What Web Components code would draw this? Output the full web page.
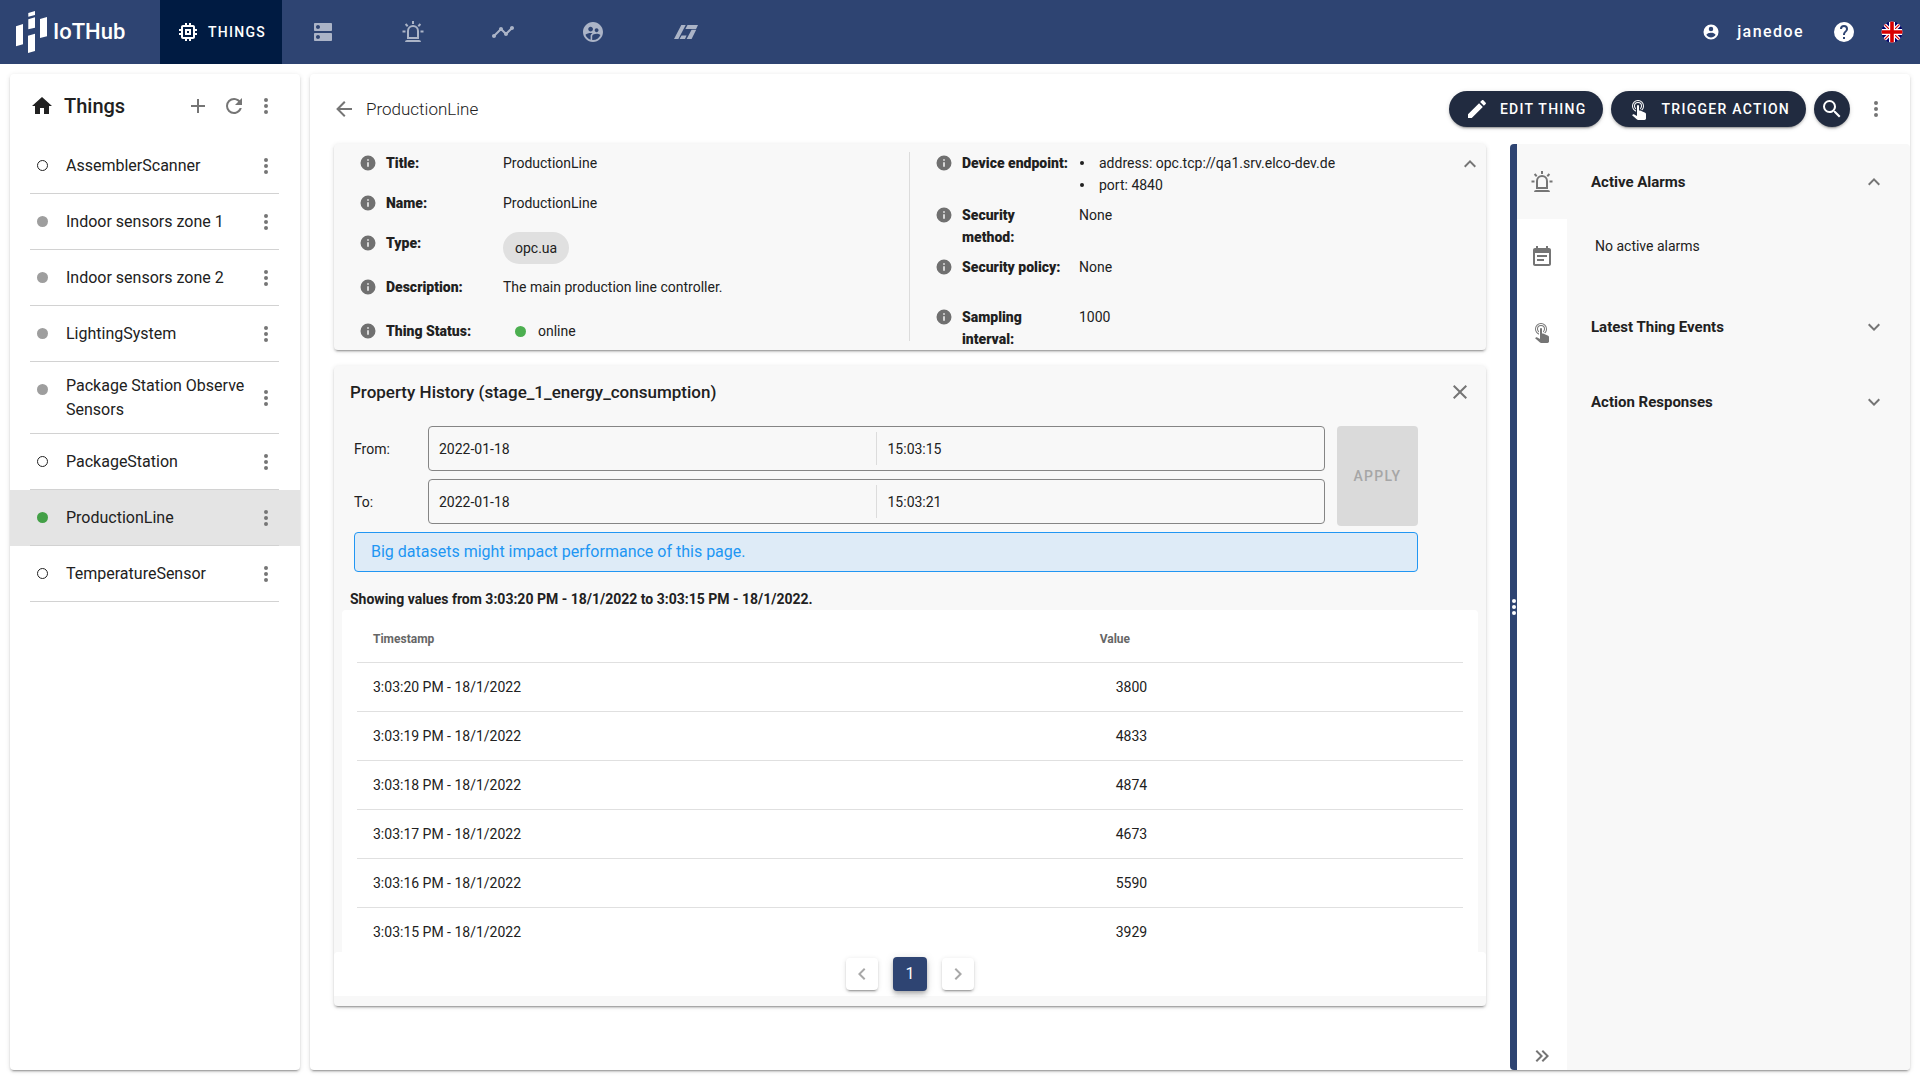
<!DOCTYPE html>
<html lang="en">
<head>
<meta charset="utf-8">
<meta name="viewport" content="width=device-width, initial-scale=1">
<title>IoTHub - Things</title>
<style>
html,body{margin:0;height:100%}
body{font:14px/22px Roboto,"Liberation Sans",sans-serif;color:#212121;background:#fff}
</style>
</head>
<body>
<iot-app></iot-app>
<script>
const BASE = `
*{box-sizing:border-box}
button{font:inherit;color:inherit;background:none;border:0;padding:0;margin:0;cursor:pointer;display:inline-flex;align-items:center;justify-content:center}
button:disabled{cursor:default}
h1,h2,h3,p,ul,dl,dd,dt{margin:0;padding:0;font:inherit}
a{color:inherit;text-decoration:none}
.card{border-radius:4px;box-shadow:0 3px 1px -2px rgba(0,0,0,.2),0 2px 2px rgba(0,0,0,.14),0 1px 5px rgba(0,0,0,.12)}
`;
function define(name, html, init) {
  const t = document.createElement('template');
  t.innerHTML = html.replace('<style>', '<style>' + BASE);
  customElements.define(name, class extends HTMLElement {
    constructor() {
      super();
      this.attachShadow({mode: 'open'}).append(t.content.cloneNode(true));
    }
    connectedCallback() { if (init) init(this, this.shadowRoot); }
  });
}

const ICONS = {
  memory: 'M15 9H9v6h6V9zm-2 4h-2v-2h2v2zm8-2V9h-2V7c0-1.1-.9-2-2-2h-2V3h-2v2h-2V3H9v2H7c-1.1 0-2 .9-2 2v2H3v2h2v2H3v2h2v2c0 1.1.9 2 2 2h2v2h2v-2h2v2h2v-2h2c1.1 0 2-.9 2-2v-2h2v-2h-2v-2h2zm-4 6H7V7h10v10z',
  dns: 'M20 13H4c-.55 0-1 .45-1 1v6c0 .55.45 1 1 1h16c.55 0 1-.45 1-1v-6c0-.55-.45-1-1-1zM7 19c-1.1 0-2-.9-2-2s.9-2 2-2 2 .9 2 2-.9 2-2 2zM20 3H4c-.55 0-1 .45-1 1v6c0 .55.45 1 1 1h16c.55 0 1-.45 1-1V4c0-.55-.45-1-1-1zM7 9c-1.1 0-2-.9-2-2s.9-2 2-2 2 .9 2 2-.9 2-2 2z',
  alarm: 'M6,6.9L3.87,4.78L5.28,3.37L7.4,5.5L6,6.9M13,1V4H11V1H13M20.13,4.78L18,6.9L16.6,5.5L18.72,3.37L20.13,4.78M4.5,10.5V12.5H1.5V10.5H4.5M19.5,10.5H22.5V12.5H19.5V10.5M6,20H18A2,2 0 0,1 20,22H4A2,2 0 0,1 6,20M12,5A6,6 0 0,1 18,11V19H6V11A6,6 0 0,1 12,5M12,7A4,4 0 0,0 8,11V17H16V11A4,4 0 0,0 12,7Z',
  timeline: 'M23 8c0 1.1-.9 2-2 2-.18 0-.35-.02-.51-.07l-3.56 3.55c.05.16.07.34.07.52 0 1.1-.9 2-2 2s-2-.9-2-2c0-.18.02-.36.07-.52l-2.55-2.55c-.16.05-.34.07-.52.07s-.36-.02-.52-.07l-4.55 4.56c.05.16.07.33.07.51 0 1.1-.9 2-2 2s-2-.9-2-2 .9-2 2-2c.18 0 .35.02.51.07l4.56-4.55C8.02 9.36 8 9.18 8 9c0-1.1.9-2 2-2s2 .9 2 2c0 .18-.02.36-.07.52l2.55 2.55c.16-.05.34-.07.52-.07s.36.02.52.07l3.55-3.56C19.02 8.35 19 8.18 19 8c0-1.1.9-2 2-2s2 .9 2 2z',
  users: 'M11.99 2c-5.52 0-10 4.48-10 10s4.48 10 10 10 10-4.48 10-10-4.48-10-10-10zm3.61 6.34c1.07 0 1.93.86 1.93 1.93 0 1.07-.86 1.93-1.93 1.93-1.07 0-1.93-.86-1.93-1.93-.01-1.07.86-1.93 1.93-1.93zm-6-1.58c1.3 0 2.36 1.06 2.36 2.36 0 1.3-1.06 2.36-2.36 2.36s-2.36-1.06-2.36-2.36c0-1.31 1.05-2.36 2.36-2.36zm0 9.13v3.75c-2.4-.75-4.3-2.6-5.14-4.96 1.05-1.12 3.67-1.69 5.14-1.69.53 0 1.2.08 1.9.22-1.64.87-1.9 2.02-1.9 2.68zM11.99 20c-.27 0-.53-.01-.79-.04v-4.07c0-1.42 2.94-2.13 4.4-2.13 1.07 0 2.92.39 3.84 1.15-1.17 2.97-4.06 5.09-7.45 5.09z',
  slashes: 'M7.3 5H11.7L4.4 19H0zM7.6 15.4H12.6L11 19H5.6zM13.5 5H24L22.1 8.9H11.4zM17.6 9.8H22.2L17.6 19H12.6z',
  account: 'M12,19.2C9.5,19.2 7.29,17.92 6,16C6.03,14 10,12.9 12,12.9C14,12.9 17.97,14 18,16C16.71,17.92 14.5,19.2 12,19.2M12,5A3,3 0 0,1 15,8A3,3 0 0,1 12,11A3,3 0 0,1 9,8A3,3 0 0,1 12,5M12,2A10,10 0 0,0 2,12A10,10 0 0,0 12,22A10,10 0 0,0 22,12C22,6.47 17.5,2 12,2Z',
  help: 'M15.07,11.25L14.17,12.17C13.45,12.89 13,13.5 13,15H11V14.5C11,13.39 11.45,12.39 12.17,11.67L13.41,10.41C13.78,10.05 14,9.55 14,9C14,7.89 13.1,7 12,7A2,2 0 0,0 10,9H8A4,4 0 0,1 12,5A4,4 0 0,1 16,9C16,9.88 15.64,10.67 15.07,11.25M13,19H11V17H13M12,2A10,10 0 0,0 2,12A10,10 0 0,0 12,22A10,10 0 0,0 22,12C22,6.47 17.5,2 12,2Z',
  info: 'M13,9H11V7H13M13,17H11V11H13M12,2A10,10 0 0,0 2,12A10,10 0 0,0 12,22A10,10 0 0,0 22,12A10,10 0 0,0 12,2Z',
  home: 'M10,20V14H14V20H19V12H22L12,3L2,12H5V20H10Z',
  plus: 'M19,13H13V19H11V13H5V11H11V5H13V11H19V13Z',
  refresh: 'M17.65,6.35C16.2,4.9 14.21,4 12,4A8,8 0 0,0 4,12A8,8 0 0,0 12,20C15.73,20 18.84,17.45 19.73,14H17.65C16.83,16.33 14.61,18 12,18A6,6 0 0,1 6,12A6,6 0 0,1 12,6C13.66,6 15.14,6.69 16.22,7.78L13,11H20V4L17.65,6.35Z',
  dots: 'M12,16A2,2 0 0,1 14,18A2,2 0 0,1 12,20A2,2 0 0,1 10,18A2,2 0 0,1 12,16M12,10A2,2 0 0,1 14,12A2,2 0 0,1 12,14A2,2 0 0,1 10,12A2,2 0 0,1 12,10M12,4A2,2 0 0,1 14,6A2,2 0 0,1 12,8A2,2 0 0,1 10,6A2,2 0 0,1 12,4Z',
  back: 'M20,11V13H8L13.5,18.5L12.08,19.92L4.16,12L12.08,4.08L13.5,5.5L8,11H20Z',
  pencil: 'M20.71,7.04C21.1,6.65 21.1,6 20.71,5.63L18.37,3.29C18,2.9 17.35,2.9 16.96,3.29L15.12,5.12L18.87,8.87M3,17.25V21H6.75L17.81,9.93L14.06,6.18L3,17.25Z',
  tap: 'M10,9A1,1 0 0,1 11,8A1,1 0 0,1 12,9V13.47L13.21,13.6L18.15,15.79C18.68,16.03 19,16.56 19,17.14V21.5C18.97,22.32 18.32,22.97 17.5,23H11C10.62,23 10.26,22.85 10,22.57L5.1,18.37L5.84,17.6C6.03,17.39 6.3,17.28 6.58,17.28H6.8L10,19V9M11,5A4,4 0 0,1 15,9C15,10.5 14.2,11.77 13,12.46V11.24C13.61,10.69 14,9.89 14,9A3,3 0 0,0 11,6A3,3 0 0,0 8,9C8,9.89 8.39,10.69 9,11.24V12.46C7.8,11.77 7,10.5 7,9A4,4 0 0,1 11,5M11,3A6,6 0 0,1 17,9C17,10.7 16.29,12.23 15.16,13.33L14.16,12.88C15.28,11.96 16,10.56 16,9A5,5 0 0,0 11,4A5,5 0 0,0 6,9C6,11.05 7.23,12.81 9,13.58V14.66C6.67,13.83 5,11.61 5,9A6,6 0 0,1 11,3Z',
  search: 'M9.5,3A6.5,6.5 0 0,1 16,9.5C16,11.11 15.41,12.59 14.44,13.73L14.71,14H15.5L20.5,19L19,20.5L14,15.5V14.71L13.73,14.44C12.59,15.41 11.11,16 9.5,16A6.5,6.5 0 0,1 3,9.5A6.5,6.5 0 0,1 9.5,3M9.5,5C7,5 5,7 5,9.5C5,12 7,14 9.5,14C12,14 14,12 14,9.5C14,7 12,5 9.5,5Z',
  note: 'M17 10H7v2h10v-2zm2-7h-1V1h-2v2H8V1H6v2H5c-1.11 0-1.99.9-1.99 2L3 19c0 1.1.89 2 2 2h14c1.1 0 2-.9 2-2V5c0-1.1-.9-2-2-2zm0 16H5V8h14v11zm-5-5H7v2h7v-2z',
  up: 'M7.41,15.41L12,10.83L16.59,15.41L18,14L12,8L6,14L7.41,15.41Z',
  down: 'M7.41,8.58L12,13.17L16.59,8.58L18,10L12,16L6,10L7.41,8.58Z',
  left: 'M15.41,16.58L10.83,12L15.41,7.41L14,6L8,12L14,18L15.41,16.58Z',
  right: 'M8.59,16.58L13.17,12L8.59,7.41L10,6L16,12L10,18L8.59,16.58Z',
  collapse: 'M5.59,7.41L7,6L13,12L7,18L5.59,16.59L10.17,12L5.59,7.41M11.59,7.41L13,6L19,12L13,18L11.59,16.59L16.17,12L11.59,7.41Z',
  close: 'M19,6.41L17.59,5L12,10.59L6.41,5L5,6.41L10.59,12L5,17.59L6.41,19L12,13.41L17.59,19L19,17.59L13.41,12L19,6.41Z'
};
define('iot-icon', `<style>
:host{display:inline-flex;flex:none;width:24px;height:24px}
svg{width:100%;height:100%;fill:currentColor}
</style><svg viewBox="0 0 24 24" aria-hidden="true"><path/></svg>`,
(el, root) => root.querySelector('path').setAttribute('d', ICONS[el.getAttribute('name')]));

define('iot-logo', `<style>
:host{display:flex;align-items:center;color:#fff}
svg{width:32px;height:42px;fill:currentColor}
.name{font-size:22px;line-height:32px;font-weight:500;margin-left:5px}
</style>
<svg viewBox="0 0 32 42" aria-hidden="true"><path d="M0 15.3L7 13V33.3L0 35.3zM12.3 2L19 0V4L12.3 5.7zM12.3 8.3L19 6.3V16.7L12.3 18.3zM12 24.7L19 22.7V40L12 42zM24 8L31 6V25.3L24 27z"/></svg>
<span class="name">IoTHub</span>`);

define('iot-flag', `<style>
:host{display:flex}
svg{width:22px;height:22px}
</style>
<svg viewBox="0 0 22 22" role="img" aria-label="English"><defs><clipPath id="c"><circle cx="11" cy="11" r="10.5"/></clipPath></defs>
<g clip-path="url(#c)"><rect width="22" height="22" fill="#00006b"/>
<path d="M0 0L22 22M22 0L0 22" stroke="#fff" stroke-width="3.6"/><path d="M0 0L22 22M22 0L0 22" stroke="#d00" stroke-width="1.2"/>
<path d="M11 0V22M0 11H22" stroke="#fff" stroke-width="6"/><path d="M11 0V22M0 11H22" stroke="#d80000" stroke-width="3.6"/></g></svg>`);

define('iot-topbar', `<style>
:host{display:flex;align-items:center;height:64px;flex:none;background:#2e4472;color:#fff}
iot-logo{width:160px;flex:none;padding-left:16px}
nav{display:flex;align-items:center;align-self:stretch;gap:66px;color:#abb4c7}
a{display:flex;align-items:center;justify-content:center}
.on{align-self:stretch;justify-content:flex-start;width:122px;padding-left:16px;gap:8px;margin-right:-37px;background:#001b42;color:#fff;font-weight:500;letter-spacing:.09em}
.wide{width:30px}
.end{display:flex;align-items:center;margin-left:auto;padding-right:17px}
.user{gap:17px;font-size:16px;line-height:24px;font-weight:500;letter-spacing:.09em}
.user iot-icon{width:18px;height:18px}
.help{margin:0 25px 0 28px}
</style>
<iot-logo></iot-logo>
<nav>
<a class="on" href="#things"><iot-icon name="memory"></iot-icon><span>THINGS</span></a>
<a href="#servers" aria-label="Data sources"><iot-icon name="dns"></iot-icon></a>
<a href="#alarms" aria-label="Alarms"><iot-icon name="alarm"></iot-icon></a>
<a href="#charts" aria-label="Charts"><iot-icon name="timeline"></iot-icon></a>
<a href="#users" aria-label="Users"><iot-icon name="users"></iot-icon></a>
<a class="wide" href="#flows" aria-label="Flows"><iot-icon name="slashes"></iot-icon></a>
</nav>
<div class="end">
<button class="user"><iot-icon name="account"></iot-icon>janedoe</button>
<button class="help" aria-label="Help"><iot-icon name="help"></iot-icon></button>
<button aria-label="Language"><iot-flag></iot-flag></button>
</div>`);

define('thing-item', `<style>
:host{display:block;padding:0 21px 0 20px;color:#212121;font-size:16px;line-height:24px}
:host([selected]){background:#e4e4e4}
.row{display:flex;min-height:56px;border-bottom:1px solid #d2d2d2}
.dot{flex:none;width:11px;height:11px;margin:22px 18px 0 7px;border-radius:50%;background:#9e9e9e}
:host([status=unknown]) .dot{background:none;border:1px solid #212121}
:host([status=online]) .dot{background:#43a047}
a{flex:1;padding:16px 0 15px}
:host([tall]) a{padding:12px 0 11px}
button{color:#757575;margin-right:1px}
</style>
<div class="row"><span class="dot"></span><a href="#thing"><slot></slot></a><button aria-label="More"><iot-icon name="dots"></iot-icon></button></div>`);

define('things-list', `<style>
:host{display:block;background:#fff}
header{display:flex;align-items:center;height:64px;padding:0 22px 0 20px;color:#757575}
header .home{color:#212121}
h1{flex:1;font-size:20px;line-height:32px;font-weight:500;color:#212121;margin-left:10px}
button{margin-left:12px}
button:last-child{margin-left:8px}
</style>
<header><iot-icon class="home" name="home"></iot-icon><h1>Things</h1>
<button aria-label="Add"><iot-icon name="plus"></iot-icon></button>
<button aria-label="Refresh"><iot-icon name="refresh"></iot-icon></button>
<button aria-label="More"><iot-icon name="dots"></iot-icon></button></header>
<thing-item status="unknown">AssemblerScanner</thing-item>
<thing-item>Indoor sensors zone 1</thing-item>
<thing-item>Indoor sensors zone 2</thing-item>
<thing-item>LightingSystem</thing-item>
<thing-item tall>Package Station Observe Sensors</thing-item>
<thing-item status="unknown">PackageStation</thing-item>
<thing-item status="online" selected>ProductionLine</thing-item>
<thing-item status="unknown">TemperatureSensor</thing-item>`);

define('pill-button', `<style>
:host{display:block}
button{height:36px;border-radius:18px;background:#212b40;color:#fff;font-weight:500;letter-spacing:.09em;padding:0 16px;gap:11px;box-shadow:0 3px 1px -2px rgba(0,0,0,.2),0 2px 2px rgba(0,0,0,.14),0 1px 5px rgba(0,0,0,.12)}
:host([round]) button{width:36px;padding:0}
</style><button><slot></slot></button>`,
(el, root) => { if (el.title) root.querySelector('button').setAttribute('aria-label', el.title); });

define('thing-field', `<style>
:host{display:flex;align-items:flex-start}
iot-icon{width:18px;height:18px;color:#707070;margin:2px 9px 0 0}
.label{width:117px;flex:none;font-weight:700}
.label span{display:block;max-width:108px}
</style><iot-icon name="info"></iot-icon><div class="label"><span><slot name="label"></slot></span></div><div><slot></slot></div>`);

define('thing-details', `<style>
:host{display:flex;background:#f8f8f8;padding:8px 4px 0 0}
.col{display:grid;align-content:start;padding-left:25px}
.a{width:50%;flex:none;margin-right:1px;grid-template-rows:40px 40px 44px 44px 22px}
.b{flex:1;grid-template-rows:52px 52px 50px 44px}
.line{width:1px;background:#dcdcdc;margin-bottom:9px}
.chip{display:block;background:#e0e0e0;border-radius:16px;line-height:32px;padding:0 12px}
.status{display:flex;align-items:center;gap:12px;padding-left:12px}
.status i{width:11px;height:11px;border-radius:50%;background:#4caf50}
li{display:flex;align-items:center}
li::before{content:"";width:4px;height:4px;border-radius:50%;background:#212121;margin:0 15px 0 1px}
button{align-self:flex-start;color:#757575}
</style>
<div class="col a">
<thing-field><b slot="label">Title:</b>ProductionLine</thing-field>
<thing-field><b slot="label">Name:</b>ProductionLine</thing-field>
<thing-field><b slot="label">Type:</b><span class="chip">opc.ua</span></thing-field>
<thing-field><b slot="label">Description:</b>The main production line controller.</thing-field>
<thing-field><b slot="label">Thing Status:</b><span class="status"><i></i>online</span></thing-field>
</div>
<div class="line"></div>
<div class="col b">
<thing-field><b slot="label">Device endpoint:</b><ul><li>address: opc.tcp://qa1.srv.elco-dev.de</li><li>port: 4840</li></ul></thing-field>
<thing-field><b slot="label">Security method:</b>None</thing-field>
<thing-field><b slot="label">Security policy:</b>None</thing-field>
<thing-field><b slot="label">Sampling interval:</b>1000</thing-field>
</div>
<button aria-label="Collapse"><iot-icon name="up"></iot-icon></button>`);

define('date-range', `<style>
:host{display:grid;grid-template-columns:74px 1fr 81px;row-gap:8px;align-items:center}
.field{display:flex;align-items:center;height:45px;border:1px solid #858585;border-radius:4px;margin-right:12px}
input{flex:1;width:0;height:33px;font:inherit;color:inherit;background:none;border:0;outline:0;padding:0 10px;margin:0}
input + input{border-left:1px solid #dcdcdc;padding-left:11px}
button{grid-column:3;grid-row:1/3;align-self:stretch;margin-bottom:-2px;background:#dadada;color:#a6a6a6;border-radius:4px;font-weight:500;letter-spacing:.09em}
</style>
<label for="fd">From:</label><div class="field"><input id="fd" value="2022-01-18"><input aria-label="From time" value="15:03:15"></div>
<label for="td">To:</label><div class="field"><input id="td" value="2022-01-18"><input aria-label="To time" value="15:03:21"></div>
<button disabled>APPLY</button>`);

define('value-table', `<style>
:host{display:block;background:#fff;border-radius:4px;padding:4px 15px 0;margin:0 8px -5px}
table{width:100%;border-collapse:separate;border-spacing:0;table-layout:fixed}
th,td{height:49px;padding:0 16px;text-align:left;border-bottom:1px solid #e0e0e0}
th{font-size:12px;font-weight:700;color:#666;padding-top:2px}
th:first-child{width:65.7%}
td + td{padding-left:32px}
</style>
<table><thead><tr><th>Timestamp</th><th>Value</th></tr></thead><tbody></tbody></table>`,
(el, root) => {
  const values = [[20, 3800], [19, 4833], [18, 4874], [17, 4673], [16, 5590], [15, 3929]];
  root.querySelector('tbody').innerHTML = values.map(([s, v]) => `<tr><td>3:03:${s} PM - 18/1/2022</td><td>${v}</td></tr>`).join('');
});

define('page-nav', `<style>
:host{display:block;background:#fff;position:relative;border-radius:4px 4px 0 0}
nav{display:flex;justify-content:center;align-items:center;height:44px;gap:15px}
button{width:32px;height:32px;border-radius:4px;background:#fff;color:#a8a8a8;box-shadow:0 3px 1px -2px rgba(0,0,0,.2),0 2px 2px rgba(0,0,0,.14),0 1px 5px rgba(0,0,0,.12)}
.on{width:34px;height:34px;background:#2e4472;color:#fff;font-size:16px;box-shadow:0 2px 4px -1px rgba(0,0,0,.2),0 4px 5px rgba(0,0,0,.14),0 1px 10px rgba(0,0,0,.12)}
</style>
<nav><button aria-label="Previous page" disabled><iot-icon name="left"></iot-icon></button><button class="on">1</button><button aria-label="Next page" disabled><iot-icon name="right"></iot-icon></button></nav>`);

define('property-history', `<style>
:host{display:block;background:#f8f8f8;padding-bottom:10px}
header{display:flex;align-items:center;justify-content:space-between;height:52px;padding:0 14px 0 16px}
h2{font-size:17px;line-height:24px;font-weight:500}
header button{color:#757575}
.form{margin:8px 68px 0 20px}
.note{margin-top:8px;border:1px solid #2196f3;border-radius:4px;background:#deebf7;color:#2196f3;font-size:16px;line-height:38px;padding:0 16px}
.sum{font-weight:700;margin:16px 16px 0}
</style>
<header><h2>Property History (stage_1_energy_consumption)</h2><button aria-label="Close"><iot-icon name="close"></iot-icon></button></header>
<div class="form"><date-range></date-range><p class="note">Big datasets might impact performance of this page.</p></div>
<p class="sum">Showing values from 3:03:20 PM - 18/1/2022 to 3:03:15 PM - 18/1/2022.</p>
<value-table></value-table>
<page-nav></page-nav>`);

define('side-section', `<style>
:host{display:block}
button{width:100%;height:75px;padding:0 24px;justify-content:space-between;font-size:15px;font-weight:700}
iot-icon{color:#757575}
.body{height:70px;padding:16px 28px;display:none}
:host([open]) .body{display:block}
</style><button><slot name="title"></slot><iot-icon name="down"></iot-icon></button><div class="body"><slot></slot></div>`,
(el, root) => {
  const icon = document.createElement('iot-icon');
  icon.setAttribute('name', el.hasAttribute('open') ? 'up' : 'down');
  root.querySelector('iot-icon').replaceWith(icon);
});

define('side-panel', `<style>
:host{display:flex;background:#f8f8f8;border-radius:4px}
.grip{flex:none;width:7px;background:#2e4472;border-radius:4px 0 0 4px;display:flex;flex-direction:column;align-items:center;justify-content:center;gap:2px}
.grip i{width:4px;height:4px;border-radius:50%;background:#fff}
.rail{flex:none;width:50px;background:#fff;display:flex;flex-direction:column;color:#757575}
.rail button{height:75px}
.rail .on{background:#f8f8f8}
.rail .last{margin-top:auto;height:28px}
.body{flex:1}
</style>
<div class="grip"><i></i><i></i><i></i></div>
<div class="rail"><button class="on" aria-label="Alarms"><iot-icon name="alarm"></iot-icon></button><button aria-label="Events"><iot-icon name="note"></iot-icon></button><button aria-label="Actions"><iot-icon name="tap"></iot-icon></button><button class="last" aria-label="Collapse"><iot-icon name="collapse"></iot-icon></button></div>
<div class="body">
<side-section open><span slot="title">Active Alarms</span>No active alarms</side-section>
<side-section><span slot="title">Latest Thing Events</span></side-section>
<side-section><span slot="title">Action Responses</span></side-section>
</div>`);

define('thing-view', `<style>
:host{display:flex;flex-direction:column;background:#fff}
header{display:flex;align-items:center;height:70px;flex:none;padding:0 22px;color:#757575}
h2{flex:1;font-size:17px;line-height:24px;font-weight:300;color:#212121;margin-left:10px}
pill-button{margin-right:8px}
.more{margin-left:6px}
.main{flex:1;display:flex;min-height:0}
.left{flex:1;padding:0 24px;display:flex;flex-direction:column;gap:16px}
side-panel{width:25%}
</style>
<header><button aria-label="Back"><iot-icon name="back"></iot-icon></button><h2>ProductionLine</h2>
<pill-button><iot-icon name="pencil"></iot-icon>EDIT THING</pill-button>
<pill-button><iot-icon name="tap"></iot-icon>TRIGGER ACTION</pill-button>
<pill-button round title="Search"><iot-icon name="search"></iot-icon></pill-button>
<button class="more" aria-label="More"><iot-icon name="dots"></iot-icon></button></header>
<div class="main"><div class="left"><thing-details class="card"></thing-details><property-history class="card"></property-history></div><side-panel></side-panel></div>`);

define('iot-app', `<style>
:host{display:flex;flex-direction:column;min-height:100vh}
main{flex:1;display:flex;gap:10px;padding:10px}
things-list{width:290px;flex:none}
thing-view{flex:1}
</style><iot-topbar></iot-topbar><main><things-list class="card"></things-list><thing-view class="card"></thing-view></main>`);
</script>
</body>
</html>
